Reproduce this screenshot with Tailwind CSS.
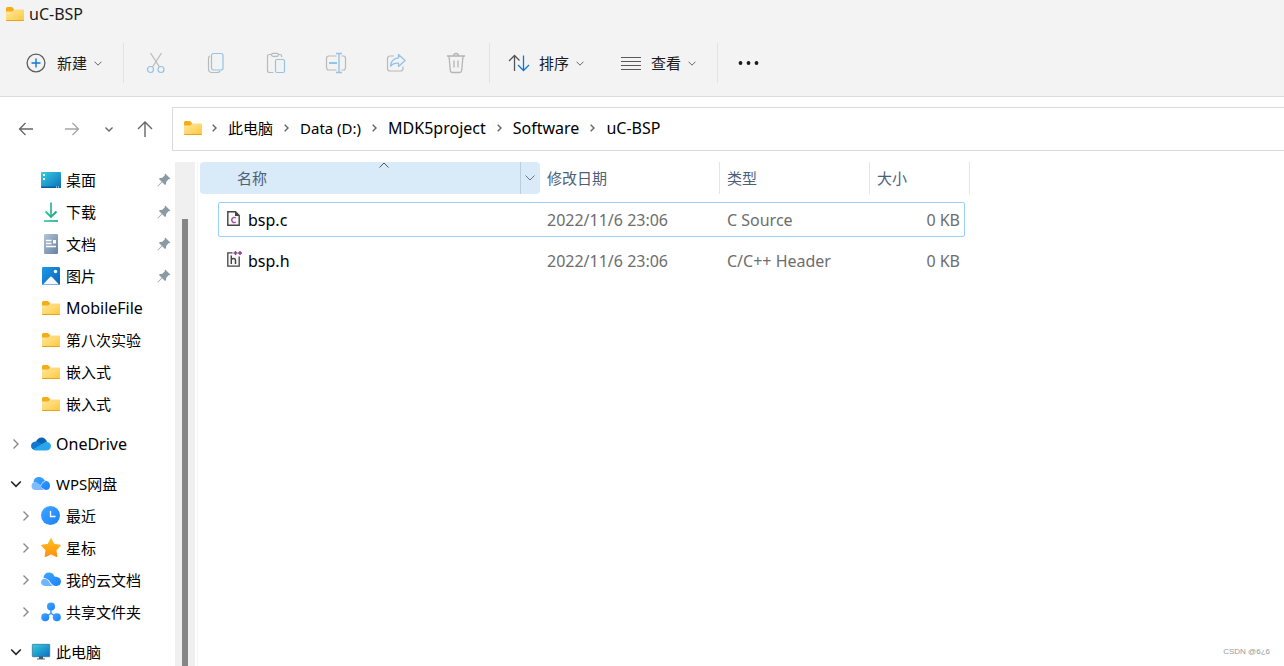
<!DOCTYPE html>
<html lang="zh-CN">
<head>
<meta charset="utf-8">
<meta name="viewport" content="width=device-width, initial-scale=1">
<title>uC-BSP</title>
<script src="https://cdn.jsdelivr.net/npm/@tailwindcss/browser@4"></script>
</head>
<body class="h-screen flex flex-col overflow-hidden bg-white text-black text-[15px] leading-5 font-['Noto_Sans','Noto_Sans_CJK_SC',sans-serif]">

<svg class="absolute size-0" aria-hidden="true">
  <defs>
    <linearGradient id="gFolder" x1="0" y1="0" x2="1" y2="1"><stop offset="0" stop-color="#ffe9a2"/><stop offset="1" stop-color="#ffc83d"/></linearGradient>
    <linearGradient id="gScreen" x1="0" y1="0" x2="1" y2="1"><stop offset="0" stop-color="#33cfe0"/><stop offset="1" stop-color="#0f6cbd"/></linearGradient>
    <linearGradient id="gGreen" x1="0" y1="0" x2="1" y2="0"><stop offset="0" stop-color="#36c98d"/><stop offset="1" stop-color="#10a08e"/></linearGradient>
    <linearGradient id="gDoc" x1="0" y1="0" x2="1" y2="1"><stop offset="0" stop-color="#b3c4d8"/><stop offset="1" stop-color="#64819f"/></linearGradient>
    <linearGradient id="gPic" x1="0" y1="0" x2="1" y2="1"><stop offset="0" stop-color="#1c9be6"/><stop offset="1" stop-color="#0a62b8"/></linearGradient>
    <linearGradient id="gBlue" x1="0" y1="0" x2="1" y2="1"><stop offset="0" stop-color="#41a6ff"/><stop offset="1" stop-color="#1a80fb"/></linearGradient>
    <linearGradient id="gStar" x1="0" y1="0" x2="0" y2="1"><stop offset="0" stop-color="#ffc020"/><stop offset="1" stop-color="#ff9010"/></linearGradient>
  </defs>
  <symbol id="folder" viewBox="0 0 20 20">
    <path d="M1 4.500Q1 3 2.300 3H6.500Q7.200 3 7.800 3.800L9 5.200V9H1Z" fill="#f4ac18"/>
    <path d="M1 7.500H7Q8 7.500 9 5.500H18Q19 5.500 19 6.500V16Q19 17 18 17H2Q1 17 1 16Z" fill="url(#gFolder)"/>
    <path d="M1 15.700Q1 17 2 17H18Q19 17 19 15.700L18.500 16H1.500Z" fill="#e9a21b"/>
  </symbol>
  <symbol id="pin" viewBox="0 0 14 14">
    <path d="M8.300.5L13.500 5.700L12.400 6.300L11.800 6.100L9.300 8.700L9 11.300L8 12L5.200 9.300L1.200 13.300L.5 13.500L.7 12.800L4.700 8.800L2 6L2.800 5L5.300 4.800L7.900 2.200L7.700 1.500Z" fill="#8d9aa3"/>
  </symbol>
  <symbol id="right" viewBox="0 0 8 12"><path d="M1.500 1.500L6 6L1.500 10.500" fill="none" stroke="currentColor" stroke-width="1.400"/></symbol>
  <symbol id="down" viewBox="0 0 12 8"><path d="M1.200 1.500L6 6.300L10.800 1.500" fill="none" stroke="currentColor" stroke-width="1.600"/></symbol>
  <symbol id="crumb" viewBox="0 0 5 8"><path d="M.7.700L4 4L.7 7.300" fill="none" stroke="currentColor" stroke-width="1.400"/></symbol>
  <symbol id="caret" viewBox="0 0 8 5"><path d="M.5.700L4 4.200L7.500.700" fill="none" stroke="currentColor"/></symbol>
</svg>

<header class="shrink-0 bg-[#f3f3f3] border-b border-[#dcdcdc]">
  <h1 class="flex items-center gap-1 h-[30px] pl-[5px] pb-0.5 text-base leading-5 text-[#1b1b1b]">
    <svg class="size-5"><use href="#folder"/></svg>uC-BSP
  </h1>
  <div class="flex items-center h-[66px] pl-4 text-[#1b1b1b]">
    <button class="flex items-center w-[107px] h-10 pl-[10px]">
      <svg class="size-5 mr-[11px]" viewBox="0 0 20 20" fill="none"><circle cx="10" cy="10" r="8.900" stroke="#5c5c5c" stroke-width="1.300"/><path d="M10 5.500V14.500M5.500 10H14.500" stroke="#0f78d4" stroke-width="1.400"/></svg>新建<svg class="w-2 h-[5px] ml-[7px] text-[#666]"><use href="#caret"/></svg>
    </button>
    <div class="w-px h-10 bg-[#e2e2e2] mr-0.5"></div>
    <button aria-label="剪切" class="flex justify-center items-center w-[60px] h-10"><svg class="w-5 h-[22px]" viewBox="0 0 20 22" fill="none" stroke-width="1.200"><path d="M4.500 1L13.500 15M15.500 1L6.500 15" stroke="#b9b9b9"/><circle cx="4.500" cy="17.500" r="3" stroke="#92c3e8"/><circle cx="15" cy="17.500" r="3" stroke="#92c3e8"/></svg></button>
    <button aria-label="复制" class="flex justify-center items-center w-[60px] h-10"><svg class="w-5 h-[22px]" viewBox="0 0 20 22" fill="none" stroke-width="1.200"><path d="M4 4Q2.500 4.500 2.500 6.500V17Q2.500 20.500 6 20.500H11.500Q13.500 20.500 14 19" stroke="#b9b9b9"/><rect x="5.500" y="1.500" width="11.500" height="16.500" rx="2" stroke="#92c3e8"/></svg></button>
    <button aria-label="粘贴" class="flex justify-center items-center w-[60px] h-10"><svg class="w-5 h-[22px]" viewBox="0 0 20 22" fill="none" stroke-width="1.200"><path d="M6 2.500H3.500Q1.500 2.500 1.500 4.500V18.500Q1.500 20.500 3.500 20.500H7.500M12 2.500H14Q15.700 2.500 15.700 4.500V5" stroke="#b9b9b9"/><rect x="5.500" y="1.300" width="7" height="3" rx="1.500" stroke="#b9b9b9"/><rect x="9.500" y="7.500" width="9" height="13" rx="1.500" stroke="#92c3e8"/></svg></button>
    <button aria-label="重命名" class="flex justify-center items-center w-[60px] h-10"><svg class="w-[22px] h-[22px]" viewBox="0 0 22 22" fill="none" stroke-width="1.200"><path d="M11.500 4H4Q1.500 4 1.500 6.500V15.500Q1.500 18 4 18H11.500M16.500 4H18.500Q20.500 4 20.500 6.500V15.500Q20.500 18 18.500 18H16.500" stroke="#b9b9b9"/><path d="M4 11H12" stroke="#92c3e8" stroke-width="2"/><path d="M11 1.500H17M11 20.500H17M14 1.500V20.500" stroke="#92c3e8" stroke-width="1.400"/></svg></button>
    <button aria-label="共享" class="flex justify-center items-center w-[60px] h-10"><svg class="w-5 h-[22px]" viewBox="0 0 20 22" fill="none" stroke-width="1.200"><path d="M8 4H4Q1.500 4 1.500 6.500V16.500Q1.500 19 4 19H14.500Q17 19 17 16.500V14.500" stroke="#b9b9b9"/><path d="M12.500 2.500L19 8.500L12.500 14.500V11.200Q7.500 10.500 4.500 14.200Q5 6.500 12.500 5.800Z" stroke="#92c3e8" stroke-linejoin="round" stroke-width="1.300"/></svg></button>
    <button aria-label="删除" class="flex justify-center items-center w-[60px] h-10"><svg class="w-5 h-[22px]" viewBox="0 0 20 22" fill="none" stroke="#b5b5b5" stroke-width="1.300"><path d="M1 4H19M7.500 4Q7.500 1.500 10 1.500T12.500 4M3 4L4.300 18.500Q4.500 20.500 6.500 20.500H13.500Q15.500 20.500 15.700 18.500L17 4M8 8.500V15.500M12 8.500V15.500"/></svg></button>
    <div class="w-px h-10 bg-[#e2e2e2] ml-[3px]"></div>
    <button class="flex items-center h-10 pl-[18px]">
      <svg class="w-[22px] h-5 mr-[9px]" viewBox="0 0 22 20" fill="none" stroke-width="1.300"><path d="M6.500 18V2.500M1 8L6.500 2.500L11.500 7.500" stroke="#555"/><path d="M15.500 2.500V17.500M10 12L15.500 17.500L21 12" stroke="#0f78d4"/></svg>排序<svg class="w-2 h-[5px] ml-[7px] text-[#666]"><use href="#caret"/></svg>
    </button>
    <button class="flex items-center h-10 pl-9">
      <svg class="w-[22px] h-5 mr-[9px]" viewBox="0 0 22 20" fill="none" stroke="#5a5a5a" stroke-width="1.200"><path d="M1 4.500H21M1 8.500H21M1 12.500H21M1 16.500H21"/></svg>查看<svg class="w-2 h-[5px] ml-[7px] text-[#666]"><use href="#caret"/></svg>
    </button>
    <div class="w-px h-10 bg-[#e2e2e2] ml-[21px]"></div>
    <button aria-label="更多" class="flex items-center h-10 pl-5"><svg class="w-[22px] h-1" viewBox="0 0 22 4" fill="#1b1b1b"><circle cx="2.500" cy="2" r="1.900"/><circle cx="10.500" cy="2" r="1.900"/><circle cx="18.500" cy="2" r="1.900"/></svg></button>
  </div>
</header>

<div class="shrink-0 flex h-[65px] pt-[10px]">
  <div class="flex items-center w-[172px] h-11 shrink-0 pl-[18px] text-[#666]">
    <button aria-label="后退"><svg class="size-4" viewBox="0 0 16 16" fill="none" stroke="currentColor" stroke-width="1.300"><path d="M15 8H1.500M7.500 2L1.500 8L7.500 14"/></svg></button>
    <button aria-label="前进" class="ml-[30px] text-[#a5a5a5]"><svg class="size-4" viewBox="0 0 16 16" fill="none" stroke="currentColor" stroke-width="1.300"><path d="M1 8H14.500M8.500 2L14.500 8L8.500 14"/></svg></button>
    <button aria-label="最近位置" class="ml-[25px]"><svg class="w-2 h-[5px]" viewBox="0 0 8 5" fill="none" stroke="currentColor" stroke-width="1.400"><path d="M.5.500L4 4L7.500.500"/></svg></button>
    <button aria-label="向上" class="ml-6"><svg class="w-4 h-[18px]" viewBox="0 0 16 18" fill="none" stroke="currentColor" stroke-width="1.400"><path d="M8 17V2M1 9L8 2L15 9"/></svg></button>
  </div>
  <nav aria-label="地址" class="flex flex-1 items-center h-11 pl-[10px] pb-0.5 border border-r-0 border-[#d9d9d9]">
    <svg class="size-5 mr-[9px]"><use href="#folder"/></svg>
    <div class="flex items-center gap-[11px] text-[#666]">
      <svg class="w-[5px] h-2"><use href="#crumb"/></svg>
      <a href="#" class="text-black">此电脑</a><svg class="w-[5px] h-2"><use href="#crumb"/></svg>
      <a href="#" class="text-black">Data (D:)</a><svg class="w-[5px] h-2"><use href="#crumb"/></svg>
      <a href="#" class="text-base leading-5 text-black">MDK5project</a><svg class="w-[5px] h-2"><use href="#crumb"/></svg>
      <a href="#" class="text-base leading-5 text-black">Software</a><svg class="w-[5px] h-2"><use href="#crumb"/></svg>
      <a href="#" class="text-base leading-5 text-black">uC-BSP</a>
    </div>
  </nav>
</div>

<div class="flex flex-1 min-h-0">
  <nav aria-label="导航窗格" class="w-[175px] shrink-0 pt-0.5 overflow-hidden">
    <ul class="[&_a]:flex [&_a]:items-center [&_a]:h-8 [&_a]:gap-[5px]">
      <li><a href="#" class="pl-[41px] pr-1"><svg class="size-5" viewBox="0 0 20 20"><rect y="2" width="20" height="16" rx="1" fill="url(#gScreen)"/><path d="M0 16.500H20V17Q20 18 19 18H1Q0 18 0 17Z" fill="#0b5c9b"/><path d="M2 4H4V6H2ZM2 8H4V10H2Z" fill="#fff"/><path d="M15 17H16M17 17H18" stroke="#fff"/></svg>桌面<svg class="size-[14px] ml-auto"><use href="#pin"/></svg></a></li>
      <li><a href="#" class="pl-[41px] pr-1"><svg class="size-5" viewBox="0 0 20 20" fill="none" stroke="url(#gGreen)" stroke-width="1.800"><path d="M4.500 9.500L10 15L15.500 9.500"/><path d="M9.200 .5H10.800V15H9.200Z" fill="#25b08c" stroke="none"/><path d="M3 18.200H17V19.800H3Z" fill="url(#gGreen)" stroke="none"/></svg>下载<svg class="size-[14px] ml-auto"><use href="#pin"/></svg></a></li>
      <li><a href="#" class="pl-[41px] pr-1"><svg class="size-5" viewBox="0 0 20 20"><rect x="3" width="14" height="20" rx="1.200" fill="url(#gDoc)"/><path d="M5 6.500H10.500M5 9.500H10.500M5 12.500H15" stroke="#fff" stroke-width="1.300"/><path d="M12 6H15V9.500H12Z" fill="#fff"/></svg>文档<svg class="size-[14px] ml-auto"><use href="#pin"/></svg></a></li>
      <li><a href="#" class="pl-[41px] pr-1"><svg class="size-5" viewBox="0 0 20 20"><rect x="1" y="1" width="18" height="18" rx="1.200" fill="url(#gPic)"/><path d="M2 18.500L9 11Q10 10 11 11L18 18.500Z" fill="#f2f8fe"/><circle cx="14.500" cy="5.500" r="1.700" fill="#fff"/></svg>图片<svg class="size-[14px] ml-auto"><use href="#pin"/></svg></a></li>
      <li><a href="#" class="pl-[41px] text-base leading-5"><svg class="size-5"><use href="#folder"/></svg>MobileFile</a></li>
      <li><a href="#" class="pl-[41px]"><svg class="size-5"><use href="#folder"/></svg>第八次实验</a></li>
      <li><a href="#" class="pl-[41px]"><svg class="size-5"><use href="#folder"/></svg>嵌入式</a></li>
      <li><a href="#" class="pl-[41px]"><svg class="size-5"><use href="#folder"/></svg>嵌入式</a></li>
      <li class="mt-2"><a href="#" class="pl-3 text-base leading-5"><svg class="w-2 h-3 mr-[6px] text-[#888]"><use href="#right"/></svg><svg class="size-5" viewBox="0 0 20 20"><path d="M5 8Q6.500 3.500 10.500 3.500Q14.500 3.500 16 8L12 11Z" fill="#0a62b5"/><path d="M4.500 16Q0 15.500 0 12Q0 8 4.500 7.500Q7 7 9 9L14 12L6 16Z" fill="#1179cf"/><path d="M11 10L14.500 8Q19.500 7.500 20 12Q19.500 16 16 16.500H5Q3 16.500 2 15.200Z" fill="#28a8ea"/></svg>OneDrive</a></li>
      <li class="mt-2"><a href="#" class="pl-[10px]"><svg class="w-3 h-2 mr-1 text-[#222]"><use href="#down"/></svg><svg class="size-5" viewBox="0 0 20 20"><path d="M2.500 8Q3 3 8 3Q12 3 13.500 6.500Q19 7 19 11.500Q19 16 14.500 16L9.500 13Q7 8.500 2.500 8Z" fill="url(#gBlue)"/><path d="M3 8Q8 8 10 12.500Q11.500 15.500 14 16H4Q.5 15.500.500 12Q.5 9 3 8Z" fill="#7fbcff"/><path d="M9.500 12Q11 7.500 14.500 7" stroke="#d9ecff" fill="none" stroke-width=".8"/></svg>WPS网盘</a></li>
      <li><a href="#" class="pl-[22px]"><svg class="w-2 h-3 mr-[6px] text-[#888]"><use href="#right"/></svg><svg class="size-5" viewBox="0 0 20 20"><circle cx="9.500" cy="9.500" r="9.500" fill="url(#gBlue)"/><path d="M9.500 5V10.500H14.500" stroke="#fff" fill="none" stroke-width="1.300"/></svg>最近</a></li>
      <li><a href="#" class="pl-[22px]"><svg class="w-2 h-3 mr-[6px] text-[#888]"><use href="#right"/></svg><svg class="size-5" viewBox="0 0 20 20"><path d="M10 1L12.800 6.500L19 7.500L14.700 12L15.600 18.300L10 15.600L4.400 18.300L5.300 12L1 7.500L7.200 6.500Z" fill="url(#gStar)" stroke="url(#gStar)" stroke-width="1.500" stroke-linejoin="round"/></svg>星标</a></li>
      <li><a href="#" class="pl-[22px]"><svg class="w-2 h-3 mr-[6px] text-[#888]"><use href="#right"/></svg><svg class="size-5" viewBox="0 0 20 20"><path d="M2.500 8Q3 2.500 8 2.500Q12 2.500 13.500 6.500Q20 7 20 11.500Q19.500 16 15 16Q12 16 9.500 12.500Q7 8 2.500 8Z" fill="url(#gBlue)"/><path d="M3.500 8.800Q6.500 8.800 8.500 12.500Q10 15 12 16H4Q0 15.500 0 12Q.5 9 3.500 8.800Z" fill="#6fb5ff"/></svg>我的云文档</a></li>
      <li><a href="#" class="pl-[22px]"><svg class="w-2 h-3 mr-[6px] text-[#888]"><use href="#right"/></svg><svg class="size-5" viewBox="0 0 20 20" fill="url(#gBlue)"><path d="M9.300 6H10.700V11L15 14L14 15L10 12L6 15L5 14L9.300 11Z"/><circle cx="10" cy="4.500" r="4"/><circle cx="4.200" cy="15.200" r="4"/><circle cx="15.800" cy="15.200" r="4"/></svg>共享文件夹</a></li>
      <li class="mt-2"><a href="#" class="pl-[10px]"><svg class="w-3 h-2 mr-1 text-[#222]"><use href="#down"/></svg><svg class="size-5" viewBox="0 0 20 20"><path d="M8 14H12V17H8Z" fill="#456"/><path d="M6 16.500H14V17.500H6Z" fill="#567"/><rect x="1.300" y="2.300" width="17.400" height="12.400" rx=".5" fill="url(#gScreen)" stroke="#2b6f8f" stroke-width=".7"/></svg>此电脑</a></li>
    </ul>
  </nav>
  <div class="flex justify-center w-5 shrink-0 pt-[57px] bg-[#f0f0f0]" aria-hidden="true">
    <div class="w-[6px] bg-[#868686]"></div>
  </div>
  <main class="flex-1 ml-0.5 pl-0.5 border-l border-[#f5f5f5]">
    <table class="block text-left text-[#6d6d6d]">
      <thead class="block">
        <tr class="flex h-8 text-[#4c607a] [&_button]:flex [&_button]:items-center [&_button]:h-8">
          <th class="relative flex w-[340px] font-normal bg-[#d9eaf8] rounded-sm" aria-sort="ascending">
            <button class="flex-1 pl-[37px]">名称</button>
            <svg class="absolute top-0 left-[179px] w-[10px] h-[6px]" viewBox="0 0 10 6" fill="none" stroke="#555"><path d="M.5 5.500L5 1L9.500 5.500"/></svg>
            <button aria-label="筛选名称" class="w-5 pl-1 border-l border-[#b9cddd]"><svg class="w-[10px] h-[6px]" viewBox="0 0 10 6" fill="none" stroke="#60758a"><path d="M.5.500L5 5L9.500.500"/></svg></button>
          </th>
          <th class="w-[180px] font-normal border-r border-[#e5e5e5]"><button class="pl-[7px]">修改日期</button></th>
          <th class="w-[150px] font-normal border-r border-[#e5e5e5]"><button class="pl-[7px]">类型</button></th>
          <th class="w-[100px] font-normal border-r border-[#e5e5e5]"><button class="pl-[7px]">大小</button></th>
        </tr>
      </thead>
      <tbody class="flex flex-col gap-[6px] pt-2 pl-[18px] text-base leading-5">
        <tr class="flex items-center w-[747px] h-[35px] px-1 border border-[#99d1ff] rounded-[2px]">
          <td class="flex items-center w-[324px] pl-[2px] gap-[5px] text-black"><svg class="w-[18px] h-5" viewBox="0 0 18 20"><path d="M2.800 1.800H10.500L14.200 5.500V15.200H2.800Z" fill="#f7f7f7" stroke="#444" stroke-width="1.400"/><path d="M10 1.500V6H14.500Z" fill="#444"/><path d="M10.800 8A2.500 2.500 0 1 0 10.800 12" fill="none" stroke="#a650a0" stroke-width="1.400"/></svg>bsp.c</td>
          <td class="w-[180px]">2022/11/6 23:06</td><td class="w-[150px]">C Source</td><td class="flex-1 text-right">0 KB</td>
        </tr>
        <tr class="flex items-center w-[747px] h-[35px] px-1 border border-transparent">
          <td class="flex items-center w-[324px] pl-[2px] gap-[5px] text-black"><svg class="w-[18px] h-5" viewBox="0 0 18 20"><path d="M7.500 1.800H2.800V15.200H14.200V5.500" fill="#f7f7f7" stroke="#444" stroke-width="1.300"/><path d="M6.300 4.500V13M6.300 9Q6.500 7.500 8.500 7.500Q10.500 7.500 10.500 9.500V13" fill="none" stroke="#444" stroke-width="1.400"/><path d="M8.500 2H12.500M10.500 0V4M13 2H17M15 0V4" stroke="#8e3a92" stroke-width="1.400"/></svg>bsp.h</td>
          <td class="w-[180px]">2022/11/6 23:06</td><td class="w-[150px]">C/C++ Header</td><td class="flex-1 text-right">0 KB</td>
        </tr>
      </tbody>
    </table>
  </main>
</div>

<small class="absolute right-[14px] bottom-2 text-[8px] leading-3 text-[#999] font-['Liberation_Sans',sans-serif]">CSDN @6¿6</small>
</body>
</html>
